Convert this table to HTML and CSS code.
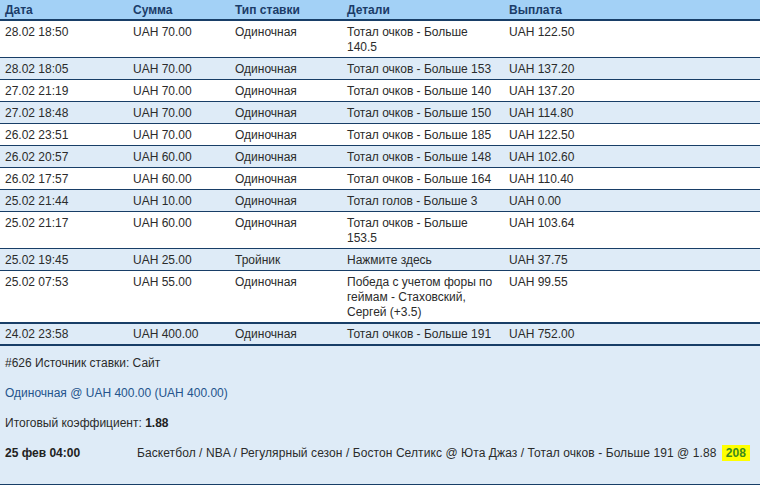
FILE: index.html
```html
<!DOCTYPE html>
<html lang="ru">
<head>
<meta charset="utf-8">
<link rel="stylesheet" href="styles.css">
</head>
<body>
<table class="bets">
  <colgroup>
    <col class="c-date"><col class="c-sum"><col class="c-type"><col class="c-det"><col class="c-pay">
  </colgroup>
  <thead>
    <tr><th>Дата</th><th>Сумма</th><th>Тип ставки</th><th>Детали</th><th>Выплата</th></tr>
  </thead>
  <tbody>
    <tr><td>28.02 18:50</td><td>UAH 70.00</td><td>Одиночная</td><td>Тотал очков - Больше 140.5</td><td>UAH 122.50</td></tr>
    <tr class="alt"><td>28.02 18:05</td><td>UAH 70.00</td><td>Одиночная</td><td>Тотал очков - Больше 153</td><td>UAH 137.20</td></tr>
    <tr><td>27.02 21:19</td><td>UAH 70.00</td><td>Одиночная</td><td>Тотал очков - Больше 140</td><td>UAH 137.20</td></tr>
    <tr class="alt"><td>27.02 18:48</td><td>UAH 70.00</td><td>Одиночная</td><td>Тотал очков - Больше 150</td><td>UAH 114.80</td></tr>
    <tr><td>26.02 23:51</td><td>UAH 70.00</td><td>Одиночная</td><td>Тотал очков - Больше 185</td><td>UAH 122.50</td></tr>
    <tr class="alt"><td>26.02 20:57</td><td>UAH 60.00</td><td>Одиночная</td><td>Тотал очков - Больше 148</td><td>UAH 102.60</td></tr>
    <tr><td>26.02 17:57</td><td>UAH 60.00</td><td>Одиночная</td><td>Тотал очков - Больше 164</td><td>UAH 110.40</td></tr>
    <tr class="alt"><td>25.02 21:44</td><td>UAH 10.00</td><td>Одиночная</td><td>Тотал голов - Больше 3</td><td>UAH 0.00</td></tr>
    <tr><td>25.02 21:17</td><td>UAH 60.00</td><td>Одиночная</td><td>Тотал очков - Больше 153.5</td><td>UAH 103.64</td></tr>
    <tr class="alt"><td>25.02 19:45</td><td>UAH 25.00</td><td>Тройник</td><td>Нажмите здесь</td><td>UAH 37.75</td></tr>
    <tr><td>25.02 07:53</td><td>UAH 55.00</td><td>Одиночная</td><td>Победа с учетом форы по геймам - Стаховский, Сергей (+3.5)</td><td>UAH 99.55</td></tr>
    <tr class="alt sel"><td>24.02 23:58</td><td>UAH 400.00</td><td>Одиночная</td><td>Тотал очков - Больше 191</td><td>UAH 752.00</td></tr>
    <tr class="detail">
      <td colspan="5">
        <div class="det-box">
          <p class="line">#626 Источник ставки: Сайт</p>
          <p class="line link">Одиночная @ UAH 400.00 (UAH 400.00)</p>
          <p class="line">Итоговый коэффициент: <b>1.88</b></p>
          <div class="event">
            <span class="ev-date">25 фев 04:00</span>
            <span class="ev-desc">Баскетбол / NBA / Регулярный сезон / Бостон Селтикс @ Юта Джаз / Тотал очков - Больше 191 @ 1.88 <span class="score">208</span></span>
          </div>
        </div>
      </td>
    </tr>
  </tbody>
</table>
</body>
</html>
```
FILE: styles.css
```css
html, body {
  margin: 0;
  padding: 0;
  background: #ffffff;
}
body {
  font-family: "Liberation Sans", Arial, sans-serif;
  font-size: 12px;
  color: #2b2b2b;
  width: 760px;
  height: 485px;
  overflow: hidden;
}
.bets {
  width: 760px;
  border-collapse: collapse;
  table-layout: fixed;
}
.c-date { width: 128px; }
.c-sum { width: 102px; }
.c-type { width: 112px; }
.c-det { width: 162px; }
.c-pay { width: 256px; }
.bets th {
  background: #a3d1f6;
  color: #1b3c68;
  font-weight: bold;
  text-align: left;
  line-height: 15px;
  padding: 3px 5px 1px 5px;
  border-bottom: 2px solid #183e67;
}
.bets td {
  line-height: 15px;
  padding: 4px 10px 2px 5px;
  vertical-align: top;
  border-bottom: 1px solid #183e67;
}
.bets tr.alt td {
  background: #deebf7;
}
.bets tr.sel td {
  border-top: 2px solid #183e67;
  padding-top: 3px;
}
.bets tr.detail td {
  background: #deebf7;
  padding: 0;
  border-top: 2px solid #183e67;
  border-bottom: 2px solid #183e67;
}
.det-box {
  padding: 10px 5px 23px 5px;
  height: 105px;
}
.line {
  margin: 0 0 15px 0;
  line-height: 15px;
}
.line.link {
  color: #24548c;
}
.line b {
  color: #222222;
}
.event {
  display: flex;
  line-height: 15px;
}
.ev-date {
  width: 132px;
  font-weight: bold;
  color: #222222;
  flex: none;
}
.ev-desc {
  white-space: nowrap;
  letter-spacing: 0.08px;
}
.score {
  background: #ffff00;
  color: #3c8a1e;
  font-weight: bold;
  padding: 1px 4px;
  margin-left: 2px;
}
```
